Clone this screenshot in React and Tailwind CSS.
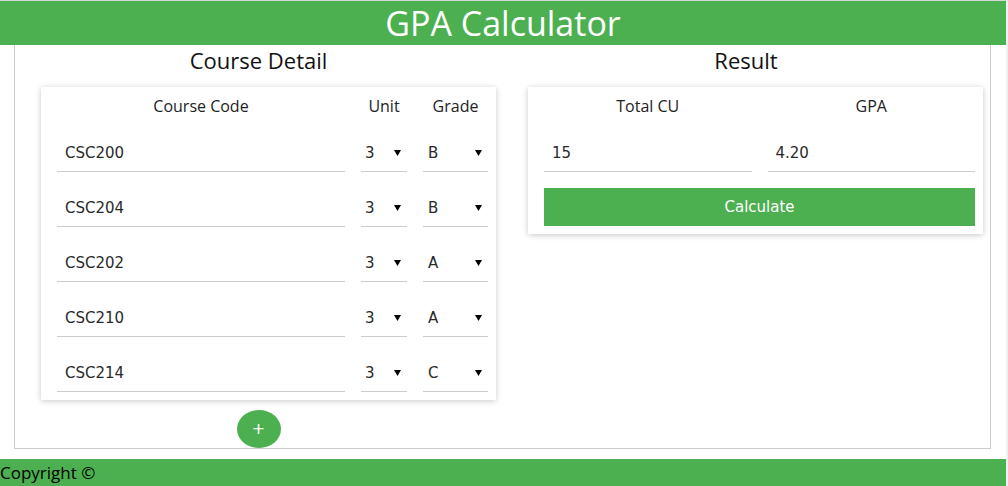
import React from "react";

const sans = { fontFamily: '"Open Sans", "Noto Sans", sans-serif' };
const verd = { fontFamily: '"DejaVu Sans", Verdana, sans-serif' };

function Arrow() {
  return (
    <svg width="7" height="6" viewBox="0 0 7 6" className="shrink-0">
      <polygon points="0,0 7,0 3.5,6" fill="#000" />
    </svg>
  );
}

function TextInput({ value }) {
  return (
    <div
      className="h-[39px] border-b border-[#cccccc] flex items-center pl-[8px] pt-[2px] text-[15px] text-[#2a2a2a]"
      style={verd}
    >
      {value}
    </div>
  );
}

function Select({ value, pl = "pl-[4px]" }) {
  return (
    <div
      className={`h-[39px] border-b border-[#cccccc] flex items-center justify-between ${pl} pr-[6px] pt-[2px] text-[15px] text-[#2a2a2a]`}
      style={verd}
    >
      <span>{value}</span>
      <Arrow />
    </div>
  );
}

const rows = [
  ["CSC200", "3", "B"],
  ["CSC204", "3", "B"],
  ["CSC202", "3", "A"],
  ["CSC210", "3", "A"],
  ["CSC214", "3", "C"],
];

export default function App() {
  return (
    <div className="w-full h-[486px] bg-[#f0f0f0] overflow-hidden">
      <div className="w-[1006px] h-[486px] bg-white border-t border-[#d6d6d6] flex flex-col" style={sans}>
        <div className="h-[44px] bg-[#4caf50] text-white text-[34px] leading-[44px] text-center">
          GPA Calculator
        </div>
        <div className="ml-[14px] w-[977px] h-[404px] border border-t-0 border-[#cccccc] flex">
          {/* Left column */}
          <div className="w-[487px] flex flex-col">
            <div className="h-[30px] text-[22px] leading-[30px] text-center text-[#111]">Course Detail</div>
            <div className="mt-[12px] ml-[26px] w-[455px] bg-white shadow-[0_1px_6px_rgba(0,0,0,0.22)] pl-[16px] pr-[8px] pb-[8px]">
              <div className="h-[38px] grid grid-cols-[288px_46px_65px] gap-x-[16px] items-center text-[16px] text-[#222] text-center">
                <div>Course Code</div>
                <div>Unit</div>
                <div>Grade</div>
              </div>
              <div className="flex flex-col gap-[16px] mt-[8px]">
                {rows.map((r) => (
                  <div key={r[0]} className="grid grid-cols-[288px_46px_65px] gap-x-[16px]">
                    <TextInput value={r[0]} />
                    <Select value={r[1]} />
                    <Select value={r[2]} pl="pl-[5px]" />
                  </div>
                ))}
              </div>
            </div>
            <div className="flex justify-center mt-[10px]">
              <button
                className="w-[44px] h-[38px] rounded-[50%] bg-[#4caf50] text-white text-[16px] leading-none flex items-center justify-center"
                style={verd}
              >
                +
              </button>
            </div>
          </div>
          {/* Right column */}
          <div className="w-[488px] flex flex-col">
            <div className="h-[30px] text-[22px] leading-[30px] text-center text-[#111]">Result</div>
            <div className="mt-[12px] ml-[26px] w-[455px] bg-white shadow-[0_1px_6px_rgba(0,0,0,0.22)] pl-[16px] pr-[8px] pb-[8px]">
              <div className="h-[38px] grid grid-cols-2 gap-x-[16px] items-center text-[16px] text-[#222] text-center">
                <div>Total CU</div>
                <div>GPA</div>
              </div>
              <div className="grid grid-cols-2 gap-x-[16px] mt-[8px]">
                <TextInput value="15" />
                <TextInput value="4.20" />
              </div>
              <button
                className="mt-[16px] w-full h-[38px] bg-[#4caf50] text-white text-[15px] pt-[1px] flex items-center justify-center"
                style={verd}
              >
                Calculate
              </button>
            </div>
          </div>
        </div>
        <div className="mt-[10px] h-[27px] bg-[#4caf50] text-[17px] leading-[27px] text-black">
          Copyright ©
        </div>
      </div>
    </div>
  );
}
